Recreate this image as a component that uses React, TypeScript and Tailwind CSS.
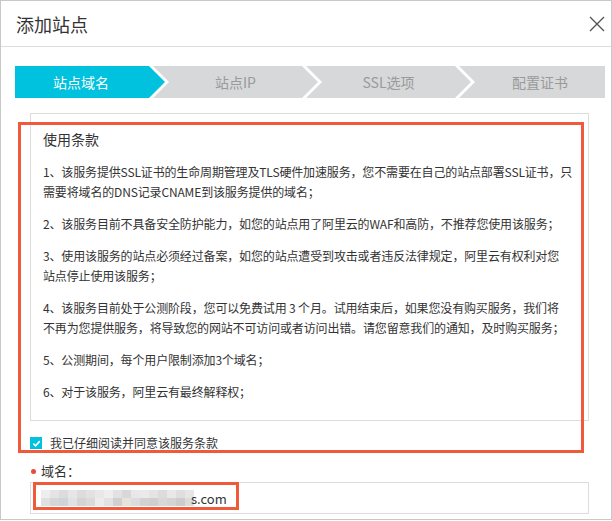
import React from 'react';

const steps = ['站点域名', '站点IP', 'SSL选项', '配置证书'];

const terms: string[][] = [
  [
    '1、该服务提供SSL证书的生命周期管理及TLS硬件加速服务，您不需要在自己的站点部署SSL证书，只',
    '需要将域名的DNS记录CNAME到该服务提供的域名；',
  ],
  ['2、该服务目前不具备安全防护能力，如您的站点用了阿里云的WAF和高防，不推荐您使用该服务；'],
  [
    '3、使用该服务的站点必须经过备案，如您的站点遭受到攻击或者违反法律规定，阿里云有权利对您',
    '站点停止使用该服务；',
  ],
  [
    '4、该服务目前处于公测阶段，您可以免费试用 3 个月。试用结束后，如果您没有购买服务，我们将',
    '不再为您提供服务，将导致您的网站不可访问或者访问出错。请您留意我们的通知，及时购买服务；',
  ],
  ['5、公测期间，每个用户限制添加3个域名；'],
  ['6、对于该服务，阿里云有最终解释权；'],
];

// pixelated (blurred) domain name
const mosaic = [
  ['#eeeeee', '#e4e4e4', '#d9dde0', '#e6e6e6', '#dcdcdc', '#e2e2e2', '#e8e8e8', '#eeeeee', '#e0e2e4', '#d8d8d8', '#e6e8ea', '#eaeaea', '#e4e4e4', '#dcdcdc', '#e8e8e8', '#dedede', '#e6e6e6'],
  ['#e0e0e0', '#d6d6d6', '#cfd4d8', '#e2e2e2', '#d4d4d4', '#dadada', '#ececec', '#e2e2e2', '#d0d0d0', '#e6e2dc', '#dadcde', '#d2d2d2', '#cfcfcf', '#d8d8d8', '#d4d4d4', '#cccccc', '#dcdcdc'],
];

const Steps = () => (
  <div className="flex h-8 ml-[14px] mr-[6px] mt-[19px]">
    {steps.map((s, i) => {
      const active = i === 0;
      const first = i === 0;
      const last = i === steps.length - 1;
      let shape = 'w-[165px] -ml-3 pl-4 pr-4 [clip-path:polygon(0_0,calc(100%_-_16px)_0,100%_50%,calc(100%_-_16px)_100%,0_100%,16px_50%)]';
      if (first) shape = 'w-[150px] pr-[18px] [clip-path:polygon(0_0,calc(100%_-_16px)_0,100%_50%,calc(100%_-_16px)_100%,0_100%)]';
      if (last) shape = 'flex-1 -ml-3 pl-4 [clip-path:polygon(0_0,100%_0,100%_100%,0_100%,16px_50%)]';
      return (
        <div
          key={s}
          className={`${shape} flex items-center justify-center text-[14px] ${
            active ? 'bg-[#00c1de] text-white' : 'bg-[#d7d8d9] text-[#9a9a9a]'
          }`}
        >
          {s}
        </div>
      );
    })}
  </div>
);

export default function App() {
  return (
    <div
      className="relative w-[612px] h-[521px] bg-white text-[#333]"
      style={{ fontFamily: '"Noto Sans CJK SC", "Noto Sans", sans-serif' }}
    >
      <div className="w-[612px] h-[520px] border border-[#c8c8c8] flex flex-col">
        {/* header */}
        <div className="h-[46px] border-b border-[#dddddd] flex items-center justify-between pl-[15px] pr-[6px]">
          <span className="text-[18px] leading-6 text-[#333]">添加站点</span>
          <svg width="16" height="16" viewBox="0 0 16 16" className="text-[#555]">
            <path d="M1 1L15 15M15 1L1 15" stroke="currentColor" strokeWidth="1.4" fill="none" />
          </svg>
        </div>

        <Steps />

        <div className="ml-[29px] w-[559px]">
          {/* terms */}
          <div className="mt-[15px] h-[308px] border border-[#dddddd] pt-[15px] pl-[12px]">
            <div className="text-[14px] leading-5">使用条款</div>
            <div className="mt-[13px] text-[12px] leading-5 tracking-[-0.15px] text-[#333]">
              {terms.map((p, i) => (
                <div key={i} className="mb-3">
                  {p.map((line) => (
                    <div key={line} className="whitespace-nowrap">
                      {line}
                    </div>
                  ))}
                </div>
              ))}
            </div>
          </div>

          {/* agree */}
          <div className="mt-[12px] h-5 flex items-center gap-2">
            <div className="w-3 h-3 bg-[#00c1de] flex items-center justify-center">
              <svg width="9" height="9" viewBox="0 0 10 10">
                <path d="M1.5 5.2L4 7.6L8.6 2.4" stroke="white" strokeWidth="1.8" fill="none" />
              </svg>
            </div>
            <span className="text-[12px] text-[#333]">我已仔细阅读并同意该服务条款</span>
          </div>

          {/* domain */}
          <div className="mt-[10px] flex items-center gap-[5px] h-[16px] pl-[1px]">
            <span className="w-[5px] h-[5px] rounded-full bg-[#e84b3c]" />
            <span className="text-[13px] text-[#333] leading-4">域名：</span>
          </div>
          <div className="mt-[3px] h-[32px] border border-[#dddddd] flex items-center pl-[10px]">
            <div className="flex flex-col">
              {mosaic.map((row, r) => (
                <div key={r} className="flex">
                  {row.map((c, k) => (
                    <div key={k} className="w-[9px] h-[8px]" style={{ backgroundColor: c }} />
                  ))}
                </div>
              ))}
            </div>
            <span className="text-[13px] text-[#333] -ml-[3px] pt-[2px]">s.com</span>
          </div>
        </div>
      </div>

      {/* annotation boxes */}
      <div className="absolute left-[18px] top-[122px] w-[566px] h-[331px] border-[3px] border-[#f05a3c] pointer-events-none" />
      <div className="absolute left-[33px] top-[482px] w-[206px] h-[28px] border-[3px] border-[#f05a3c] pointer-events-none" />
    </div>
  );
}
